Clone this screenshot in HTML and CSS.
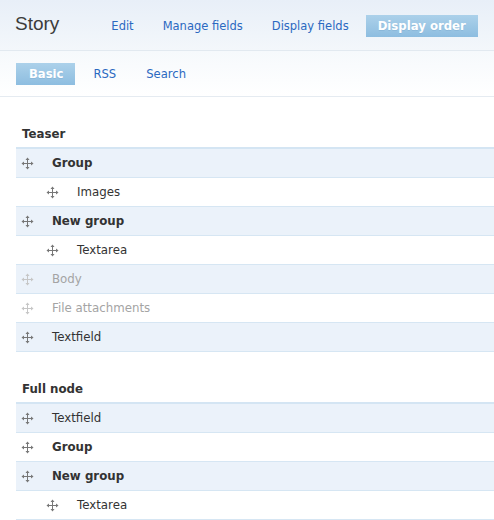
FILE: index.html
```html
<!DOCTYPE html>
<html>
<head>
<meta charset="utf-8">
<title>Story</title>
<link rel="stylesheet" href="styles.css">
</head>
<body>
<div class="header">
  <h1 class="title">Story</h1>
  <ul class="tabs">
    <li><a href="#">Edit</a></li>
    <li><a href="#">Manage fields</a></li>
    <li><a href="#">Display fields</a></li>
    <li class="active"><a href="#">Display order</a></li>
  </ul>
</div>
<div class="subtabs">
  <ul class="tabs">
    <li class="active"><a href="#">Basic</a></li>
    <li><a href="#">RSS</a></li>
    <li><a href="#">Search</a></li>
  </ul>
</div>
<div class="content">
  <div class="section">
    <h2>Teaser</h2>
    <div class="rows">
      <div class="row odd group"><svg class="handle" viewBox="0 0 13 13"><path d="M6.5 2v9M2 6.5h9" stroke="currentColor" stroke-width="1" fill="none"/><path d="M6.5 0.5L4.5 3h4zM6.5 12.5L4.5 10h4zM0.5 6.5L3 4.5v4zM12.5 6.5L10 4.5v4z" fill="currentColor"/></svg><span class="label">Group</span></div>
      <div class="row indent"><svg class="handle" viewBox="0 0 13 13"><path d="M6.5 2v9M2 6.5h9" stroke="currentColor" stroke-width="1" fill="none"/><path d="M6.5 0.5L4.5 3h4zM6.5 12.5L4.5 10h4zM0.5 6.5L3 4.5v4zM12.5 6.5L10 4.5v4z" fill="currentColor"/></svg><span class="label">Images</span></div>
      <div class="row odd group"><svg class="handle" viewBox="0 0 13 13"><path d="M6.5 2v9M2 6.5h9" stroke="currentColor" stroke-width="1" fill="none"/><path d="M6.5 0.5L4.5 3h4zM6.5 12.5L4.5 10h4zM0.5 6.5L3 4.5v4zM12.5 6.5L10 4.5v4z" fill="currentColor"/></svg><span class="label">New group</span></div>
      <div class="row indent"><svg class="handle" viewBox="0 0 13 13"><path d="M6.5 2v9M2 6.5h9" stroke="currentColor" stroke-width="1" fill="none"/><path d="M6.5 0.5L4.5 3h4zM6.5 12.5L4.5 10h4zM0.5 6.5L3 4.5v4zM12.5 6.5L10 4.5v4z" fill="currentColor"/></svg><span class="label">Textarea</span></div>
      <div class="row odd disabled"><svg class="handle" viewBox="0 0 13 13"><path d="M6.5 2v9M2 6.5h9" stroke="currentColor" stroke-width="1" fill="none"/><path d="M6.5 0.5L4.5 3h4zM6.5 12.5L4.5 10h4zM0.5 6.5L3 4.5v4zM12.5 6.5L10 4.5v4z" fill="currentColor"/></svg><span class="label">Body</span></div>
      <div class="row disabled"><svg class="handle" viewBox="0 0 13 13"><path d="M6.5 2v9M2 6.5h9" stroke="currentColor" stroke-width="1" fill="none"/><path d="M6.5 0.5L4.5 3h4zM6.5 12.5L4.5 10h4zM0.5 6.5L3 4.5v4zM12.5 6.5L10 4.5v4z" fill="currentColor"/></svg><span class="label">File attachments</span></div>
      <div class="row odd"><svg class="handle" viewBox="0 0 13 13"><path d="M6.5 2v9M2 6.5h9" stroke="currentColor" stroke-width="1" fill="none"/><path d="M6.5 0.5L4.5 3h4zM6.5 12.5L4.5 10h4zM0.5 6.5L3 4.5v4zM12.5 6.5L10 4.5v4z" fill="currentColor"/></svg><span class="label">Textfield</span></div>
    </div>
  </div>
  <div class="section">
    <h2>Full node</h2>
    <div class="rows">
      <div class="row odd"><svg class="handle" viewBox="0 0 13 13"><path d="M6.5 2v9M2 6.5h9" stroke="currentColor" stroke-width="1" fill="none"/><path d="M6.5 0.5L4.5 3h4zM6.5 12.5L4.5 10h4zM0.5 6.5L3 4.5v4zM12.5 6.5L10 4.5v4z" fill="currentColor"/></svg><span class="label">Textfield</span></div>
      <div class="row group"><svg class="handle" viewBox="0 0 13 13"><path d="M6.5 2v9M2 6.5h9" stroke="currentColor" stroke-width="1" fill="none"/><path d="M6.5 0.5L4.5 3h4zM6.5 12.5L4.5 10h4zM0.5 6.5L3 4.5v4zM12.5 6.5L10 4.5v4z" fill="currentColor"/></svg><span class="label">Group</span></div>
      <div class="row odd group"><svg class="handle" viewBox="0 0 13 13"><path d="M6.5 2v9M2 6.5h9" stroke="currentColor" stroke-width="1" fill="none"/><path d="M6.5 0.5L4.5 3h4zM6.5 12.5L4.5 10h4zM0.5 6.5L3 4.5v4zM12.5 6.5L10 4.5v4z" fill="currentColor"/></svg><span class="label">New group</span></div>
      <div class="row indent"><svg class="handle" viewBox="0 0 13 13"><path d="M6.5 2v9M2 6.5h9" stroke="currentColor" stroke-width="1" fill="none"/><path d="M6.5 0.5L4.5 3h4zM6.5 12.5L4.5 10h4zM0.5 6.5L3 4.5v4zM12.5 6.5L10 4.5v4z" fill="currentColor"/></svg><span class="label">Textarea</span></div>
    </div>
  </div>
</div>
</body>
</html>
```

FILE: styles.css
```css
html, body {
  margin: 0;
  padding: 0;
  background: #fff;
}
body {
  font-family: "DejaVu Sans", Verdana, sans-serif;
  font-size: 11.8px;
  color: #333;
}
.header {
  display: flex;
  align-items: baseline;
  height: 51px;
  box-sizing: border-box;
  padding: 14px 0 0 15px;
  background: linear-gradient(#e8eff8, #f3f7fb);
  border-bottom: 1px solid #e2e9f0;
}
.title {
  margin: 0 40px 0 0;
  font-family: "Liberation Sans", Arial, sans-serif;
  font-weight: normal;
  font-size: 19px;
  line-height: 20px;
  color: #3c3c3c;
}
.tabs {
  display: flex;
  align-items: baseline;
  gap: 5px;
  list-style: none;
  margin: 0;
  padding: 0;
  font-size: 11.6px;
}
.header .tabs {
  font-size: 11.5px;
}
.tabs a {
  display: block;
  padding: 4px 12px;
  line-height: 14px;
  color: #2b69c1;
  text-decoration: none;
}
.subtabs .tabs a {
  padding: 4px 12px 4px 13px;
}
.tabs .active a {
  color: #fff;
  font-weight: bold;
  background: linear-gradient(#acd1ea, #8dbde0);
  text-shadow: 0 1px 0 rgba(60, 110, 160, 0.15);
}
.header .tabs .active a {
  font-size: 11.7px;
}
.subtabs {
  height: 46px;
  box-sizing: border-box;
  padding: 12px 0 0 16px;
  background: linear-gradient(#f6f9fc, #fff);
  border-bottom: 1px solid #e5ebf1;
}
.content {
  padding-left: 16px;
}
.section {
  margin-top: 29px;
}
.section h2 {
  margin: 0;
  padding: 0 0 5px 6px;
  font-size: 11.8px;
  line-height: 16px;
  font-weight: bold;
  color: #333;
}
.rows {
  border-top: 2px solid #d4e5f3;
}
.row {
  display: flex;
  align-items: center;
  height: 29px;
  box-sizing: border-box;
  padding-left: 5px;
  border-bottom: 1px solid #d6e6f3;
  background: #fff;
}
.row.odd {
  background: #ebf2fa;
}
.row.indent {
  padding-left: 30px;
}
.handle {
  width: 13px;
  height: 13px;
  margin-right: 18px;
  color: #777;
  flex: none;
}
.label {
  line-height: 16px;
}
.row.group .label {
  font-weight: bold;
}
.row.disabled {
  color: #a4a4a4;
}
.row.disabled .handle {
  color: #c6c6c6;
}
```
